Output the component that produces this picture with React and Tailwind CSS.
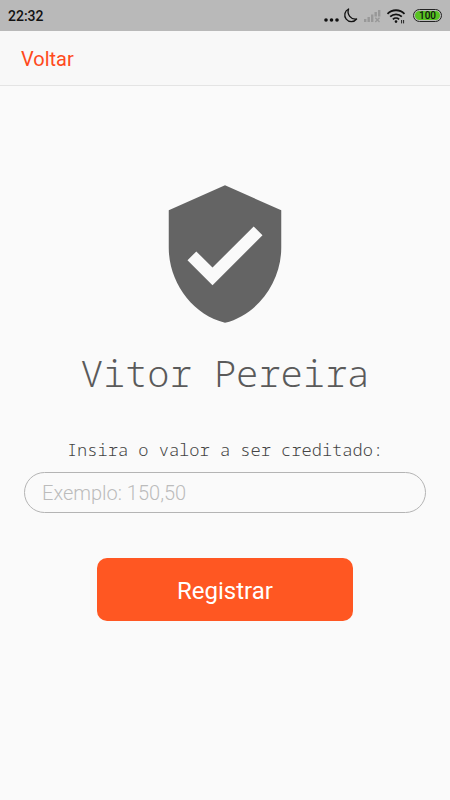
import { useState } from "react"
import { MdVerifiedUser } from "react-icons/md"

function StatusBar() {
  return (
    <div className="flex h-[31px] items-center justify-between bg-[#b9b9b9] px-2 text-[#111111]">
      <span className="text-sm font-medium">22:32</span>
      <div className="flex items-center gap-1">
        {/* Notifications + do not disturb */}
        <svg width="36" height="18" viewBox="0 0 36 18" fill="none">
          <circle cx="3" cy="13" r="1.8" fill="#111111" />
          <circle cx="8.5" cy="13" r="1.8" fill="#111111" />
          <circle cx="14" cy="13" r="1.8" fill="#111111" />
          <path d="M25.6 2a6.6 6.6 0 1 0 8 10a7.4 7.4 0 0 1-8-10z"
            stroke="#111111" strokeWidth="1.3" strokeLinejoin="round" />
        </svg>
        {/* No SIM signal */}
        <svg width="18" height="18" viewBox="0 0 18 18" fill="#989898">
          <rect x="1" y="12" width="2.4" height="3" />
          <rect x="4.5" y="10" width="2.4" height="5" />
          <rect x="8" y="7.5" width="2.4" height="7.5" />
          <rect x="11.5" y="5" width="2.4" height="4.5" />
          <rect x="15" y="3" width="2.4" height="6.5" />
          <path d="M12.3 10.8l4.2 4.2M16.5 10.8L12.3 15" stroke="#989898" strokeWidth="1.4" />
        </svg>
        {/* Wi-Fi */}
        <svg width="24" height="18" viewBox="0 0 24 18" fill="none" stroke="#111111">
          <path d="M2.5 6.8a12 12 0 0 1 17 0" strokeWidth="1.8" />
          <path d="M5.2 9.6a8.4 8.4 0 0 1 11.6 0" strokeWidth="1.8" />
          <path d="M7.9 12.3a4.6 4.6 0 0 1 6.2 0" strokeWidth="1.8" />
          <circle cx="11" cy="14.6" r="1.3" fill="#111111" stroke="none" />
          <path d="M16.6 16.4v-3.4M18.6 13v3.4" strokeWidth="0.9" />
        </svg>
        <div className="flex h-[13px] w-[29px] items-center justify-center rounded-full border border-[#222222] p-px">
          <span className="flex h-full w-full items-center justify-center rounded-full bg-[#58c322] text-[10px] leading-none font-medium">
            100
          </span>
        </div>
      </div>
    </div>
  )
}

function App() {
  const [value, setValue] = useState("")

  return (
    <div className="min-h-screen bg-[#fafafa] font-['Roboto',sans-serif]">
      <StatusBar />

      {/* Navbar */}
      <header className="flex h-[55px] items-center border-b border-[#e4e4e4] bg-[#f8f8f8] px-[21px] pt-0.5">
        <a href="#" className="text-xl text-[#ff4a1c]">Voltar</a>
      </header>

      <main className="flex flex-col items-center px-6 pt-[93px]">
        <MdVerifiedUser size={150} color="#646464" />
        <h1 className="mt-5 font-['Noto_Sans_Mono',monospace] text-[37px] leading-[48px] font-[360] whitespace-nowrap text-[#5a5a5a]">
          Vitor Pereira
        </h1>

        {/* Credit form */}
        <form className="mt-[41px] flex w-full flex-col items-center" onSubmit={(e) => e.preventDefault()}>
          <label htmlFor="valor"
            className="font-['Noto_Sans_Mono',monospace] text-[17px] leading-6 font-[360] whitespace-nowrap text-[#444444]">
            Insira o valor a ser creditado:
          </label>
          <input id="valor" type="text" inputMode="decimal" placeholder="Exemplo: 150,50"
            value={value} onChange={(e) => setValue(e.target.value)}
            className="mt-2.5 h-[41px] w-full rounded-full border border-[#b4b4b4] bg-transparent px-[17px] text-xl font-light text-[#444444] outline-none placeholder:text-[#bcbcbc]" />
          <button type="submit"
            className="mt-[45px] h-[63px] w-64 rounded-[10px] bg-[#ff5722] pt-0.5 text-2xl text-white">
            Registrar
          </button>
        </form>
      </main>
    </div>
  )
}

export default App
